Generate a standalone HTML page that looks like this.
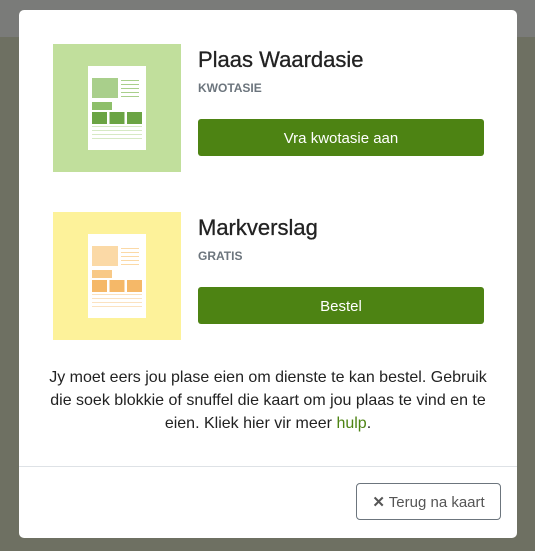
<!DOCTYPE html>
<html><head><style>
body{margin:0;width:535px;height:551px;position:relative;overflow:hidden;font-family:"Liberation Sans",sans-serif;background:#6e7062;}
.top{position:absolute;left:0;top:0;width:535px;height:37px;background:#7a7b79;}
.modal{position:absolute;left:19px;top:10px;width:498px;height:528px;background:#fff;border-radius:5px;}
.img{position:absolute;left:34px;width:128px;height:128px;}
.doc{position:absolute;left:35px;top:22px;width:58px;height:84px;background:#fff;}
h2{position:absolute;left:179px;margin:0;font-size:22px;font-weight:normal;color:#222;-webkit-text-stroke:0.3px #222;}
.sub{position:absolute;left:179px;font-size:12px;font-weight:bold;color:#6c757d;}
.btn{position:absolute;left:179px;width:286px;height:37px;background:#4d8313;color:#fff;border-radius:3px;font-size:15px;text-align:center;line-height:40px;}
p{position:absolute;left:4px;width:490px;top:356px;margin:0;text-align:center;font-size:16px;line-height:23px;color:#222;}
.hr{position:absolute;left:0;top:456px;width:498px;height:1px;background:#dee2e6;}
.foot{position:absolute;left:337px;top:473px;width:143px;height:35px;border:1px solid #6c757d;border-radius:4px;color:#555;font-size:15px;text-align:center;line-height:37px;}
</style></head><body>
<div class="top"></div>
<div class="modal">
<div class="img" style="top:34px;background:#c1df9c"><div class="doc">
<div style="position:absolute;left:4px;top:12px;width:26px;height:20px;background:#a9cf8b"></div>
<div style="position:absolute;left:33px;top:14px;width:18px;height:18px;background:repeating-linear-gradient(180deg,#a9cf8b 0 1px,#fff 1px 4px)"></div>
<div style="position:absolute;left:4px;top:46px;width:50px;height:12px;background:repeating-linear-gradient(90deg,#6ba444 0 15px,#fff 15px 17.5px)"></div>
<div style="position:absolute;left:4px;top:36px;width:20px;height:8px;background:#8ebf6a"></div>
<div style="position:absolute;left:4px;top:60px;width:50px;height:14px;background:repeating-linear-gradient(180deg,#d6e9c4 0 1px,#fff 1px 4px)"></div>
</div></div>
<h2 style="top:37px">Plaas Waardasie</h2>
<div class="sub" style="top:71px">KWOTASIE</div>
<div class="btn" style="top:109px">Vra kwotasie aan</div>
<div class="img" style="top:202px;background:#fdf29a"><div class="doc">
<div style="position:absolute;left:4px;top:12px;width:26px;height:20px;background:#fbd9a6"></div>
<div style="position:absolute;left:33px;top:14px;width:18px;height:18px;background:repeating-linear-gradient(180deg,#fbd9a6 0 1px,#fff 1px 4px)"></div>
<div style="position:absolute;left:4px;top:46px;width:50px;height:12px;background:repeating-linear-gradient(90deg,#f5b868 0 15px,#fff 15px 17.5px)"></div>
<div style="position:absolute;left:4px;top:36px;width:20px;height:8px;background:#f8c987"></div>
<div style="position:absolute;left:4px;top:60px;width:50px;height:14px;background:repeating-linear-gradient(180deg,#fbe2c0 0 1px,#fff 1px 4px)"></div>
</div></div>
<h2 style="top:205px">Markverslag</h2>
<div class="sub" style="top:239px">GRATIS</div>
<div class="btn" style="top:277px">Bestel</div>
<p>Jy moet eers jou plase eien om dienste te kan bestel. Gebruik<br>die soek blokkie of snuffel die kaart om jou plaas te vind en te<br>eien. Kliek hier vir meer <span style="color:#4d8313">hulp</span>.</p>
<div class="hr"></div>
<div class="foot"><b>✕</b> Terug na kaart</div>
</div>
</body></html>
